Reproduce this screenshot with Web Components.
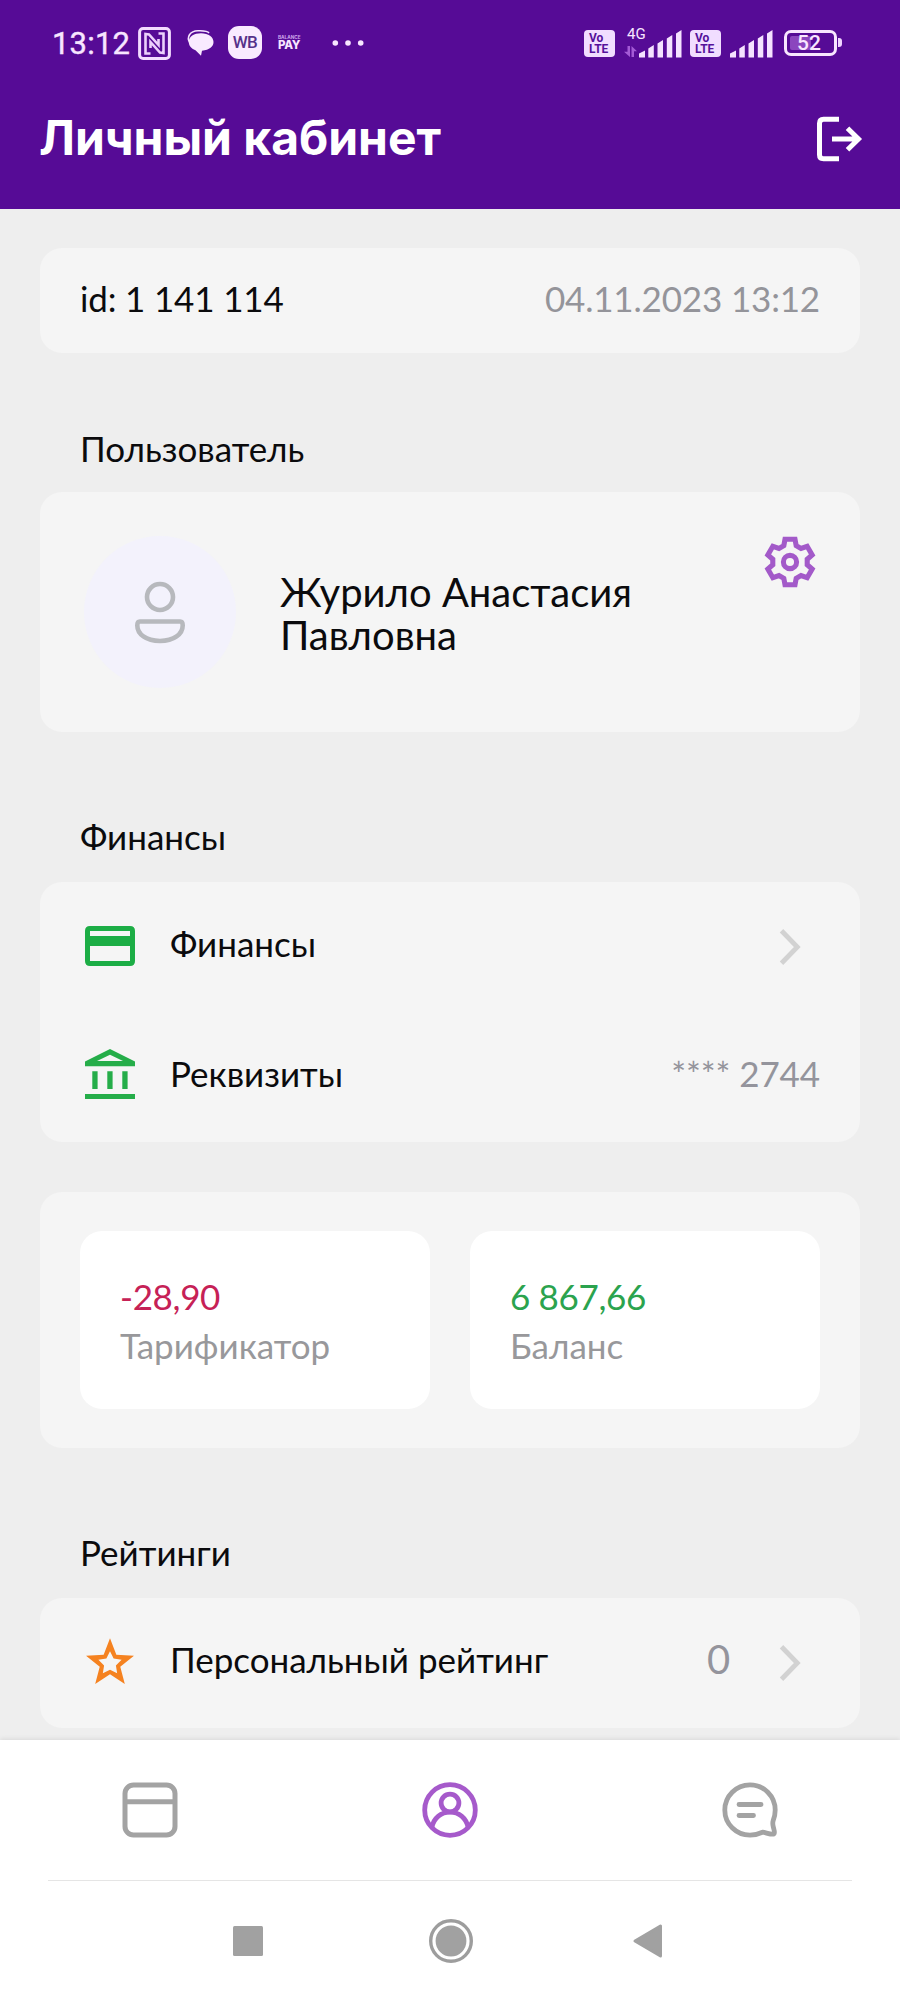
<!DOCTYPE html>
<html lang="ru">
<head>
<meta charset="utf-8">
<title>Личный кабинет</title>
<style>
  html, body { margin: 0; padding: 0; background: #eee; }
  body { width: 900px; height: 2000px; overflow: hidden; font-family: "Lato", "Liberation Sans", sans-serif; color: #0b0b0d; }
</style>
</head>
<body>
<profile-screen></profile-screen>

<script>
const ICONS = {
  nfc: [33, 33, `<rect x="1.6" y="1.6" width="29.8" height="29.8" rx="3.5" fill="none" stroke="#f3dcff" stroke-width="3"/><path d="M12.500 26.500H7.500V7L11 7.500 20.500 18V12M20.500 6.500H25.500V26L22 25.500 12.500 15V21" fill="none" stroke="#ecd0fc" stroke-width="2.600"/>`],
  chat: [27, 26, `<path d="M3 13C-1 7 3 1 11 .8 17 .6 21 1.500 22 3" fill="none" stroke="#f6e4ff" stroke-width="1.600"/><path d="M14 3.200c7.500 0 12.500 3.500 12.500 8.800 0 4.500-4 8-11.500 8.700l-1 5-5.500-5.500C4 18.500 1.800 15.500 1.800 12 1.800 6.500 7 3.200 14 3.200z" fill="#f9eaff"/>`],
  dots: [32, 6, `<g fill="#f8e6ff"><circle cx="3.300" cy="3" r="2.800"/><circle cx="16" cy="3" r="2.800"/><circle cx="28.700" cy="3" r="2.800"/></g>`],
  signal: [43, 28, `<path fill="#f5e2ff" d="M0 27.500v-4l6-3v7zM9.300 27.500V18.500l5.500-3.500v12.500zM18.500 27.500V13.500l5.500-3.500v17.500zM27.800 27.500V8.500l5.500-3.500v22.500zM37 27.500V3.500L42.500 0v27.500z"/>`],
  updown: [13, 11, `<path fill="#a45bd6" d="M3.500 0h2.500v11L0 5.800h3.500zM7.500 11V0L13 5.200H10V11z"/>`],
  exit: [48, 48, `<path d="M24 4.200H8.500Q4.500 4.200 4.500 8.200V39.800Q4.500 43.800 8.500 43.800H24M17 24H44M32.500 13.300 43.500 24 32.500 34.800" fill="none" stroke="#fff" stroke-width="5"/>`],
  person: [52, 64, `<g fill="none" stroke="#b7b9bd" stroke-width="4.600"><circle cx="26" cy="17" r="13"/><path d="M5.800 41.500H46.200Q48.700 41.500 48.700 45.500C48.700 54 40 61 26 61S3.300 54 3.300 45.500Q3.300 41.500 5.800 41.500z"/></g>`],
  card: [50, 40, `<path fill="#1cad45" fill-rule="evenodd" d="M5 0H45Q50 0 50 5V35Q50 40 45 40H5Q0 40 0 35V5Q0 0 5 0zM5 5V10H45V5zM5 20V35H45V20z"/>`],
  bank: [50, 50, `<path fill="#25ad49" fill-rule="evenodd" d="M25 0 50 12.500V17.300H0V12.500zM25 5.700 12 12H38zM7.300 22.300h5.300V40H7.300zM22.300 22.300h5.300V40h-5.300zM37.300 22.300h5.300V40h-5.300zM0 45H50v5H0z"/>`],
  chevron: [20, 36, `<path d="M1.500 1.800 17.300 18 1.500 34.200" fill="none" stroke="#d2d2d2" stroke-width="4.800"/>`],
  tabBox: [56, 56, `<g fill="none" stroke="#a3a3a3" stroke-width="5"><rect x="3" y="3" width="50" height="50" rx="8.500"/><path d="M3 19.700H53"/></g>`],
  tabUser: [56, 56, `<g fill="none" stroke="#a65acb" stroke-width="4.800"><circle cx="28" cy="28" r="25.300"/><circle cx="28" cy="21" r="8.900"/><path d="M10 45C12 36 19 30.200 28 30.200S44 36 46 45"/></g>`],
  tabChat: [56, 56, `<g fill="none" stroke="#a3a3a3" stroke-width="4.800" stroke-linecap="round" stroke-linejoin="round"><path d="M51.200 38.500C52.500 35.300 53.200 31.700 53.200 28A25.200 25.200 0 1 0 28 53.200C32.500 53.200 36.500 52 40.500 50.200 44 50.700 48 52.500 51.500 52.200 53.700 51.500 51.800 47.500 51.200 44.500 50.500 41.500 50.700 40 51.200 38.500z"/><path d="M17 22.500H39M17 33.500H31.500"/></g>`],
  square: [30, 30, `<rect width="30" height="30" rx="1.500" fill="#a1a1a1"/>`],
  home: [46, 46, `<circle cx="23" cy="23" r="20.300" fill="none" stroke="#9d9d9d" stroke-width="3.400"/><circle cx="23" cy="23" r="15.400" fill="#a1a1a1"/>`],
  back: [30, 34, `<path d="M2 17 27.500 2V32z" fill="#a1a1a1" stroke="#a1a1a1" stroke-width="3" stroke-linejoin="round"/>`]
};

// Six identical teeth rotated around the centre of the gear.
const tooth = [[-5, -22.7], [5, -22.7], [6.2, -16.3]];
const gearPoints = [];
for (let i = 0; i < 6; i++) {
  const a = i * Math.PI / 3, c = Math.cos(a), s = Math.sin(a);
  for (const [x, y] of [[-6.2, -16.3], ...tooth]) gearPoints.push((26 + x * c - y * s).toFixed(2) + ',' + (26 + x * s + y * c).toFixed(2));
}
ICONS.gear = [52, 52, `<g fill="none" stroke="#a35ac9" stroke-width="5.100"><polygon points="${gearPoints.join(' ')}"/><circle cx="26" cy="26" r="6.600"/></g>`];

// Five-pointed star with a star-shaped hole.
const starRing = (outer, inner) => Array.from({ length: 10 }, (_, i) => {
  const r = i % 2 ? inner : outer, a = i * Math.PI / 5;
  return (25 + r * Math.sin(a)).toFixed(2) + ' ' + (25.5 - r * Math.cos(a)).toFixed(2);
}).join('L');
ICONS.star = [50, 48, `<path fill="#f58220" fill-rule="evenodd" d="M${starRing(25.2, 10.8)}zM${starRing(12.2, 6.2)}z"/>`];

function define(name, html) {
  const template = document.createElement('template');
  template.innerHTML = html;
  customElements.define(name, class extends HTMLElement {
    constructor() {
      super();
      this.attachShadow({ mode: 'open' }).append(template.content.cloneNode(true));
    }
  });
}

customElements.define('app-icon', class extends HTMLElement {
  connectedCallback() {
    const [w, h, body] = ICONS[this.getAttribute('name')];
    const root = this.shadowRoot || this.attachShadow({ mode: 'open' });
    root.innerHTML = `<style>:host{display:block;flex:none;width:${w}px;height:${h}px}svg{display:block;overflow:visible}</style><svg width="${w}" height="${h}" viewBox="0 0 ${w} ${h}">${body}</svg>`;
  }
});

define('volte-badge', `
<style>
  :host { display: flex; flex-direction: column; justify-content: center; box-sizing: border-box; width: 31px; height: 27px; padding-left: 5px; border-radius: 4px; background: #f1ddff; color: #55119a; font: 700 12px/11px "Roboto", sans-serif; }
</style><span>Vo</span><span>LTE</span>`);

define('status-bar', `
<style>
  :host { display: flex; align-items: flex-start; height: 70px; padding-left: 52px; box-sizing: border-box; color: #f8e6ff; font-family: "Roboto", sans-serif; }
  .time { width: 85.500px; margin-top: 26px; font-size: 31px; line-height: 36px; font-weight: 400; letter-spacing: .2px; -webkit-text-stroke: .4px; }
  .wb { width: 34px; height: 33px; border-radius: 11px; margin: 26px 0 0 14px; background: #f9eaff; color: #55318a; font: 500 17px/33px "Roboto", sans-serif; text-align: center; letter-spacing: -.5px; }
  .pay { margin: 35px 0 0 16px; width: 24px; }
  .pay b { display: block; font: 800 11.500px/10px "Inter", sans-serif; letter-spacing: -.3px; }
  .pay small { display: block; font: 700 4.700px/5px "Inter", sans-serif; color: #cda4ea; }
  .net { width: 15px; display: flex; flex-direction: column; margin: 26px 0 0 9px; }
  .net span { font-size: 15px; line-height: 16px; padding-left: 3px; white-space: nowrap; }
  .net app-icon { margin-top: 4px; }
  volte-badge { margin-top: 30px; }
  .battery { box-sizing: border-box; width: 53px; height: 26px; margin: 29.500px 0 0 11px; border: 3px solid #f8e6ff; border-radius: 7px; padding: 3px; }
  .level { width: 21px; height: 14px; background: #8b45be; border-radius: 2px; }
  .level span { display: block; width: 38px; font-size: 21px; line-height: 15px; text-align: center; font-weight: 500; }
  .nub { width: 4px; height: 9px; margin: 38px 0 0 1px; border-radius: 0 3px 3px 0; background: #f0d5ff; }
</style>
<span class="time">13:12</span>
<app-icon name="nfc" style="margin-top:26.500px"></app-icon>
<app-icon name="chat" style="margin:30px 0 0 16.500px"></app-icon>
<span class="wb">WB</span>
<span class="pay"><small>BALANCE</small><b>PAY</b></span>
<app-icon name="dots" style="margin:39.500px 0 0 30px"></app-icon>
<volte-badge style="margin-left:220px"></volte-badge>
<span class="net"><span>4G</span><app-icon name="updown"></app-icon></span>
<app-icon name="signal" style="margin:30px 0 0 0"></app-icon>
<volte-badge style="margin-left:8px"></volte-badge>
<app-icon name="signal" style="margin:30px 0 0 9px"></app-icon>
<span class="battery"><div class="level"><span>52</span></div></span><span class="nub"></span>`);

define('page-header', `
<style>
  :host { display: block; height: 208.500px; background: #560b96; }
  .bar { display: flex; align-items: center; justify-content: space-between; height: 138px; padding: 0 37px 0 39px; }
  h1 { margin: 0 0 2px; color: #fff; font: 700 48px/60px "Inter", sans-serif; letter-spacing: -.05px; }
</style>
<status-bar></status-bar>
<div class="bar"><h1><slot></slot></h1><app-icon name="exit"></app-icon></div>`);

define('section-title', `
<style>:host { display: block; height: 44px; padding-left: 80px; font-size: 35px; line-height: 43px; }</style>
<slot></slot>`);

define('surface-card', `
<style>:host { display: block; box-sizing: border-box; margin: 0 40px; border-radius: 22px; background: #f5f5f5; }</style>
<slot></slot>`);

define('list-row', `
<style>
  :host { display: flex; align-items: center; height: 130px; padding: 0 40px; font-size: 35px; line-height: 44px; }
  .lead { width: 60px; display: flex; justify-content: center; margin: 0 30px 2px 0; }
  .label { flex: 1; padding-bottom: 8px; }
  .value { color: #94949c; display: flex; align-items: center; padding-bottom: 7px; letter-spacing: -.1px; }
</style>
<span class="lead"><slot name="icon"></slot></span><span class="label"><slot></slot></span><span class="value"><slot name="value"></slot></span><slot name="end"></slot>`);

define('user-summary', `
<style>
  :host { display: flex; height: 240px; padding: 0 40px; }
  .avatar { display: flex; align-items: center; justify-content: center; width: 152px; height: 152px; border-radius: 50%; background: #f3f2fc; margin: 44px 0 0 4px; }
  .name { flex: 1; margin: 79px 0 0 44px; font-size: 40px; line-height: 42.500px; }
  .gear { margin: 44px 4px 0 0; }
</style>
<span class="avatar"><app-icon name="person"></app-icon></span>
<div class="name"><slot></slot></div>
<app-icon class="gear" name="gear"></app-icon>`);

define('amount-tile', `
<style>
  :host { display: block; flex: 1; box-sizing: border-box; height: 178px; padding: 41px 40px 0; border-radius: 22px; background: #fff; font-size: 35px; line-height: 49px; }
  .amount { display: block; letter-spacing: -.35px; }
  .label { display: block; color: #98989b; }
</style>
<span class="amount"><slot name="amount"></slot></span><span class="label"><slot></slot></span>`);

define('tab-bar', `
<style>
  :host { display: block; height: 260px; background: #fff; box-shadow: 0 -1px 5px rgba(0,0,0,.09); position: relative; }
  .tabs { display: grid; grid-template-columns: repeat(3, 300px); justify-items: center; align-items: center; height: 140px; }
  hr { margin: 0 48px; border: 0; height: 1px; background: #e5e5e5; }
  .sys { display: grid; grid-template-columns: 30px 46px 30px; column-gap: 164.500px; align-items: center; height: 119px; padding-left: 233px; }
</style>
<nav class="tabs"><app-icon name="tabBox"></app-icon><app-icon name="tabUser"></app-icon><app-icon name="tabChat"></app-icon></nav>
<hr>
<div class="sys"><app-icon name="square"></app-icon><app-icon name="home"></app-icon><app-icon name="back" style="margin-left:-5px"></app-icon></div>`);

define('profile-screen', `
<style>
  :host { display: flex; flex-direction: column; height: 2000px; }
  main { height: 1531.500px; box-sizing: border-box; padding-top: 39.500px; }
  .meta { display: flex; justify-content: space-between; height: 105px; padding: 28px 40px 0; font-size: 35px; line-height: 44px; letter-spacing: -.17px; }
  .meta time { color: #94949a; }
  .tiles { display: flex; gap: 40px; padding: 39px 40px; }
</style>
<page-header>Личный кабинет</page-header>
<main>
  <surface-card class="meta"><span>id: 1 141 114</span><time>04.11.2023 13:12</time></surface-card>
  <section-title style="margin:73.500px 0 21.500px">Пользователь</section-title>
  <surface-card><user-summary>Журило Анастасия<br>Павловна</user-summary></surface-card>
  <section-title style="margin:83px 0 22.500px">Финансы</section-title>
  <surface-card>
    <list-row><app-icon slot="icon" name="card"></app-icon>Финансы<app-icon slot="end" name="chevron" style="margin-right:20px"></app-icon></list-row>
    <list-row><app-icon slot="icon" name="bank" style="margin-bottom:3px"></app-icon>Реквизиты<span slot="value">**** 2744</span></list-row>
  </surface-card>
  <surface-card class="tiles" style="margin-top:50.500px">
    <amount-tile><span slot="amount" style="color:#c62156">-28,90</span>Тарификатор</amount-tile>
    <amount-tile><span slot="amount" style="color:#2ba34e">6 867,66</span>Баланс</amount-tile>
  </surface-card>
  <section-title style="margin:83px 0 22.500px">Рейтинги</section-title>
  <surface-card>
    <list-row><app-icon slot="icon" name="star"></app-icon>Персональный рейтинг<span slot="value" style="font-size:40px;margin-right:50px">0</span><app-icon slot="end" name="chevron" style="margin-right:20px"></app-icon></list-row>
  </surface-card>
</main>
<tab-bar></tab-bar>
`);
</script>
</body>
</html>
